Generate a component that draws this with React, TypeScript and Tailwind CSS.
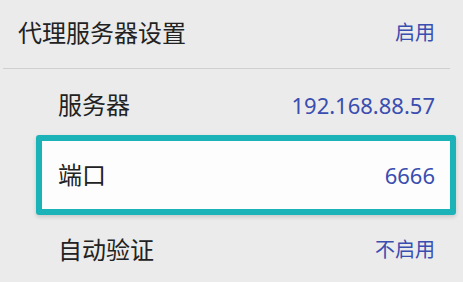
import React from "react";

const font = { fontFamily: '"Noto Sans", "Noto Sans CJK SC", sans-serif' };

export default function App() {
  return (
    <div
      className="w-[463px] h-[282px] bg-[#ebebeb] overflow-hidden text-[#222]"
      style={font}
    >
      <div className="h-[68px] flex items-center justify-between pl-[18px] pr-[28px] pb-[2px]">
        <span className="text-[24px] leading-none">代理服务器设置</span>
        <span className="text-[20px] leading-none text-[#3a4db0]">启用</span>
      </div>
      <div className="ml-[3px] w-[447px] h-[1px] bg-[#cfcfcf]" />
      <div className="h-[66px] flex items-center justify-between pl-[58px] pr-[28px] pt-[6px]">
        <span className="text-[24px] leading-none">服务器</span>
        <span className="text-[22px] leading-none text-[#3a4db0]">192.168.88.57</span>
      </div>
      <div className="ml-[36px] w-[420px] h-[80px] border-[6px] border-[#1cb3b8] rounded-[3px] bg-[#fdfdfd] shadow-[0_2px_4px_rgba(0,0,0,0.15)] flex items-center justify-between pl-[16px] pr-[15px]">
        <span className="text-[24px] leading-none">端口</span>
        <span className="text-[22px] leading-none text-[#3a4db0]">6666</span>
      </div>
      <div className="h-[64px] flex items-center justify-between pl-[58px] pr-[28px] pt-[6px]">
        <span className="text-[24px] leading-none">自动验证</span>
        <span className="text-[20px] leading-none text-[#3a4db0]">不启用</span>
      </div>
    </div>
  );
}
